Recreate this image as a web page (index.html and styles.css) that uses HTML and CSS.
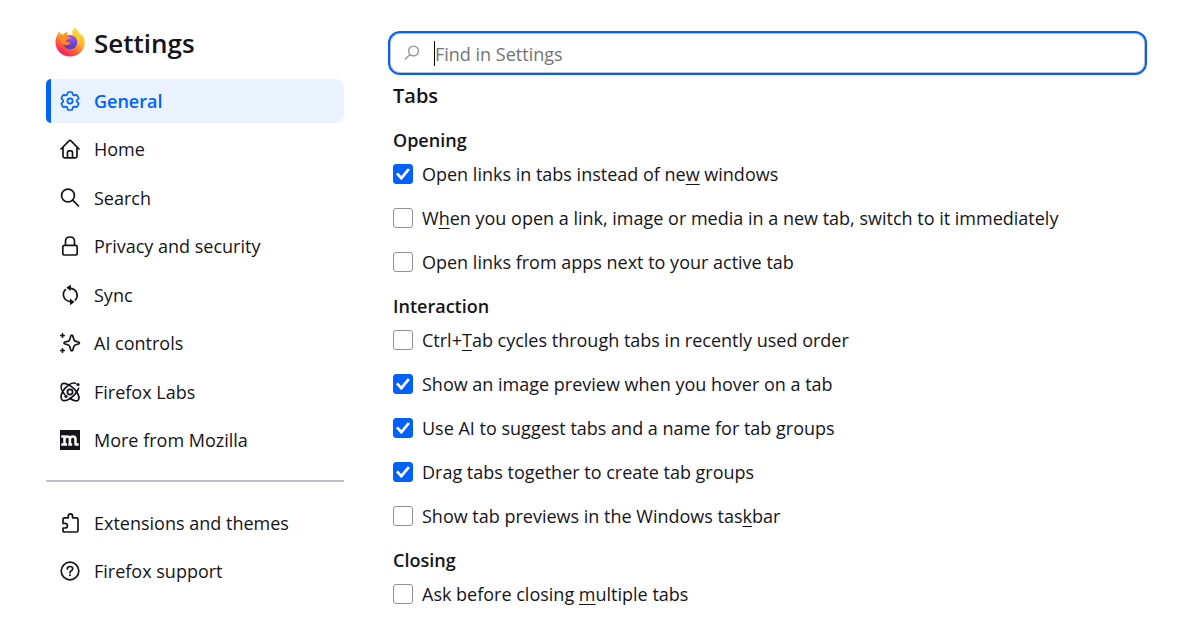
FILE: index.html
```html
<!DOCTYPE html>
<html lang="en">
<head>
<meta charset="utf-8">
<title>Settings</title>
<link rel="stylesheet" href="styles.css">
</head>
<body>
<div class="page">
  <aside class="sidebar">
    <header class="brand">
      <svg class="logo" viewBox="0 0 30 30" aria-hidden="true">
        <defs>
          <linearGradient id="flame" x1="0.85" y1="0.05" x2="0.25" y2="1">
            <stop offset="0" stop-color="#ffe63a"/>
            <stop offset="0.4" stop-color="#ffb12b"/>
            <stop offset="0.7" stop-color="#ff5a36"/>
            <stop offset="1" stop-color="#f0107c"/>
          </linearGradient>
          <radialGradient id="globe" cx="0.6" cy="0.15" r="0.8">
            <stop offset="0" stop-color="#a653f0"/>
            <stop offset="1" stop-color="#4b3fc4"/>
          </radialGradient>
          <linearGradient id="fox" x1="0" y1="0" x2="1" y2="1">
            <stop offset="0" stop-color="#ff9a2e"/>
            <stop offset="1" stop-color="#ff7a2c"/>
          </linearGradient>
        </defs>
        <path fill="url(#flame)" d="M20 0.500C22.500 2.500 23.500 4.500 24 6.200C25 6.600 25.500 7.300 26 7.800L26.600 7C29 10 30 13.500 29.700 16.500C29.100 24 22.800 29.600 15.200 29.600C7 29.600.700 23.500.500 15.800C.400 12.500 1.200 9.500 3 7.200L3.400 4.500L6.200 7.300L8.500 7.600C9.500 6 11 5 12.800 4.500C12 5.600 11.800 6.600 12 7.700L17.600 8C16.800 5 17.600 2.300 20 .500Z"/>
        <circle cx="15.200" cy="15.300" r="7" fill="url(#globe)"/>
        <path fill="url(#fox)" d="M3.400 7.500L8.800 7.700C10 6.500 11.200 5.800 12.600 5.500C11.800 7 11.700 8.300 12.200 9.200C13.600 9.500 15 9.700 15.700 10.200C15.800 11.600 14 12.200 12.400 12.500C11.600 13.400 11 14.200 11.200 15C12.800 14.600 14.200 15.200 15.400 16.100C14 18.300 11.500 18.700 9.500 18C6 16.500 5 12.800 3.400 7.500Z"/>
        <path fill="#ffcb2f" d="M17.600 8C21.500 9.800 24 13.500 22.500 18.500C25.500 14.500 25.500 9.500 22.800 6.500Z" opacity=".85"/>
      </svg>
      <h1 class="title">Settings</h1>
    </header>

    <nav aria-label="Categories">
      <ul class="nav nav-main">
        <li><a class="nav-item selected" href="#general" aria-current="page">
          <svg class="icon" viewBox="2 2 20 20"><path d="M9.594 3.940c.090-.542.560-.940 1.110-.940h2.593c.550 0 1.020.398 1.110.940l.213 1.281c.063.374.313.686.645.870.074.040.147.083.220.127.325.196.720.257 1.075.124l1.217-.456a1.125 1.125 0 0 1 1.370.490l1.296 2.247a1.125 1.125 0 0 1-.260 1.431l-1.003.827c-.293.241-.438.613-.430.992a7.723 7.723 0 0 1 0 .255c-.008.378.137.750.430.991l1.004.827c.424.350.534.955.260 1.430l-1.298 2.247a1.125 1.125 0 0 1-1.369.491l-1.217-.456c-.355-.133-.750-.072-1.076.124a6.470 6.470 0 0 1-.220.128c-.331.183-.581.495-.644.869l-.213 1.281c-.090.543-.560.940-1.110.940h-2.594c-.550 0-1.019-.398-1.110-.940l-.213-1.281c-.062-.374-.312-.686-.644-.870a6.520 6.520 0 0 1-.220-.127c-.325-.196-.720-.257-1.076-.124l-1.217.456a1.125 1.125 0 0 1-1.369-.490l-1.297-2.247a1.125 1.125 0 0 1 .260-1.431l1.004-.827c.292-.240.437-.613.430-.991a6.932 6.932 0 0 1 0-.255c.007-.380-.138-.751-.430-.992l-1.004-.827a1.125 1.125 0 0 1-.260-1.430l1.297-2.247a1.125 1.125 0 0 1 1.370-.491l1.216.456c.356.133.751.072 1.076-.124.072-.044.146-.086.220-.128.332-.183.582-.495.644-.869l.214-1.280Z"/><circle cx="12" cy="12" r="2.600"/></svg>
          <span>General</span></a></li>
        <li><a class="nav-item" href="#home">
          <svg class="icon" viewBox="0 0 20 20"><path d="M1 10L9 1.800Q10 .900 11 1.800L19 10M3 8.500V17.200Q3 18.800 4.600 18.800H15.400Q17 18.800 17 17.200V8.500M7.500 18.500V13.400Q7.500 11.800 9 11.800H11Q12.500 11.800 12.500 13.400V18.500"/></svg>
          <span>Home</span></a></li>
        <li><a class="nav-item" href="#search">
          <svg class="icon" viewBox="0 0 20 20"><circle cx="8" cy="7.500" r="6.400"/><path d="M12.700 12.200L18.500 18"/></svg>
          <span>Search</span></a></li>
        <li><a class="nav-item" href="#privacy">
          <svg class="icon" viewBox="0 0 20 20"><rect x="2.800" y="9.300" width="14.400" height="9.700" rx="1.800"/><path d="M5.500 9V5.300Q5.500 1 10 1T14.500 5.300V9"/></svg>
          <span>Privacy and security</span></a></li>
        <li><a class="nav-item" href="#sync">
          <svg class="icon" viewBox="0 0 20 20"><path d="M5.400 4.600C2 8 2.600 15.200 10 16.600M10.400 3.100C17.600 4.600 18.600 11.200 15.400 15"/><path class="solid" d="M10.800 -.500V6L6.300 2.800ZM10 13.500V20.200L14.500 16.900Z"/></svg>
          <span>Sync</span></a></li>
        <li><a class="nav-item" href="#ai">
          <svg class="icon" viewBox="0 0 20 20"><path d="M11 2.500Q11.800 1.600 12.600 2.500L14 6.800Q14.300 7.800 15.200 8.100L19 9.300Q19.800 10 19 10.700L15.200 12Q14.300 12.300 14 13.200L12.600 17.500Q11.800 18.400 11 17.500L9.600 13.200Q9.300 12.300 8.400 12L4.400 10.700Q3.600 10 4.400 9.300L8.400 8.100Q9.300 7.800 9.600 6.800Z"/><path d="M2.500.800V4.200M.800 2.500H4.200M2.500 15.800V19.200M.800 17.500H4.200"/></svg>
          <span>AI controls</span></a></li>
        <li><a class="nav-item" href="#labs">
          <svg class="icon" viewBox="0 0 20 20"><path d="M15.500 1.300C12.500.200 8 3 4.500 6.900C1.200 10.800 0 15.500 2 17.800C4.500 20.200 10 17.500 14.200 13.200C16.500 10.800 18 8.400 18.600 6.300M1.800 2.200C4 0 10 2.800 14.200 6.900C18.300 11.200 20.200 16.200 18.200 18.100C16.600 19.500 13 18.600 9.500 16.300M4.600 12.300C1.500 8.800 .200 4.500 1.800 2.200"/><circle cx="10" cy="10" r="2.600"/><circle class="solid" cx="18" cy="2.500" r="1.600"/><circle class="solid" cx="6" cy="14.300" r="1.600"/></svg>
          <span>Firefox Labs</span></a></li>
        <li><a class="nav-item" href="#mozilla">
          <svg class="icon" viewBox="0 0 20 20" aria-hidden="true"><rect class="solid" width="20" height="20"/><path class="mark" d="M1.300 6.400H4.500V15M1.300 14.600H7M4.500 9Q5 6.400 7.300 6.400Q9.900 6.400 9.900 9V15M8.300 14.600H12.200M9.900 9Q10.400 6.400 12.700 6.400Q15.500 6.400 15.500 9V14.600H18.700"/></svg>
          <span>More from Mozilla</span></a></li>
      </ul>
      <hr class="divider">
      <ul class="nav nav-extra">
        <li><a class="nav-item" href="#extensions">
          <svg class="icon" viewBox="0 0 20 20"><path d="M3 6.200Q3 4.800 4.400 4.800H8.200V3.300Q8.200.900 10.400.900T12.600 3.300V4.800H16.400Q18 4.800 18 6.400V17.400Q18 19 16.400 19H4.600Q3 19 3 17.400V15H5Q7.400 15 7.400 12.700T5 10.400H3Z"/></svg>
          <span>Extensions and themes</span></a></li>
        <li><a class="nav-item" href="#support">
          <svg class="icon" viewBox="0 0 20 20"><circle cx="10" cy="10" r="8.800"/><path d="M7.300 8Q7.300 5.500 10 5.500T12.700 7.800Q12.700 9 11.300 9.800T10 12"/><circle class="solid" cx="10" cy="14.300" r="1"/></svg>
          <span>Firefox support</span></a></li>
      </ul>
    </nav>
  </aside>

  <main class="content">
    <div class="search-box">
      <svg class="search-icon" viewBox="0 0 16 16" aria-hidden="true"><circle cx="9.500" cy="6" r="4.900"/><path d="M6 9.500L1 14.500"/></svg>
      <span class="caret"></span>
      <input class="search-input" type="search" placeholder="Find in Settings" aria-label="Find in Settings">
    </div>

    <div class="pane">
      <h2 class="pane-title">Tabs</h2>
      <section class="group">
        <h3 class="group-title">Opening</h3>
        <label class="option"><input type="checkbox" checked><span>Open links in tabs instead of ne<u>w</u> windows</span></label>
        <label class="option"><input type="checkbox"><span>W<u>h</u>en you open a link, image or media in a new tab, switch to it immediately</span></label>
        <label class="option"><input type="checkbox"><span>Open links from apps next to your active tab</span></label>
      </section>
      <section class="group">
        <h3 class="group-title">Interaction</h3>
        <label class="option"><input type="checkbox"><span>Ctrl+<u>T</u>ab cycles through tabs in recently used order</span></label>
        <label class="option"><input type="checkbox" checked><span>Show an image preview when you hover on a tab</span></label>
        <label class="option"><input type="checkbox" checked><span>Use AI to suggest tabs and a name for tab groups</span></label>
        <label class="option"><input type="checkbox" checked><span>Drag tabs together to create tab groups</span></label>
        <label class="option"><input type="checkbox"><span>Show tab previews in the Windows tas<u>k</u>bar</span></label>
      </section>
      <section class="group">
        <h3 class="group-title">Closing</h3>
        <label class="option"><input type="checkbox"><span>Ask before closing <u>m</u>ultiple tabs</span></label>
      </section>
    </div>
  </main>
</div>
</body>
</html>
```
FILE: styles.css
```css
* {
  box-sizing: border-box;
}

body {
  margin: 0;
  background: #fff;
  color: #15141a;
  font: 18px/24px "Open Sans", "Noto Sans", sans-serif;
}

h1, h2, h3, ul {
  margin: 0;
  padding: 0;
}

.page {
  display: grid;
  grid-template-columns: 298px minmax(0, 1fr);
  column-gap: 44px;
  padding: 24px 36px 12px 46px;
}

.brand {
  display: flex;
  align-items: center;
  gap: 9px;
  padding-left: 9px;
  margin-bottom: 17px;
}

.logo {
  width: 30px;
  height: 30px;
  margin-top: -2px;
}

.title {
  font-size: 26px;
  line-height: 38px;
  font-weight: 600;
}

.nav {
  display: flex;
  flex-direction: column;
  list-style: none;
}

.nav-main {
  min-height: 383px;
  justify-content: space-between;
}

.nav-extra {
  gap: 4px;
}

.nav-item {
  display: flex;
  align-items: center;
  gap: 14px;
  height: 44px;
  padding-left: 14px;
  border-radius: 8px;
  color: inherit;
  text-decoration: none;
}

.nav-item.selected {
  padding-left: 9px;
  border-left: 5px solid #0061fe;
  border-radius: 5px 8px 8px 5px;
  background: #eaf2ff;
  color: #0061fe;
  font-weight: 600;
}

.icon {
  width: 20px;
  height: 20px;
  flex: none;
  overflow: visible;
  fill: none;
  stroke: currentColor;
  stroke-width: 1.7;
  stroke-linecap: round;
  stroke-linejoin: round;
}

.icon .solid {
  fill: currentColor;
  stroke: none;
}

.icon .mark {
  stroke: #fff;
  stroke-width: 2.5;
  stroke-linecap: butt;
}

.divider {
  height: 2px;
  margin: 18px 0 19px;
  border: 0;
  background: #bfbfc9;
}

.search-box {
  display: flex;
  align-items: center;
  height: 44px;
  margin-top: 7px;
  padding: 0 14px;
  border: 2px solid #0061fe;
  border-radius: 12px;
  box-shadow: inset 0 0 0 1px #bfbfc9;
}

.search-icon {
  width: 16px;
  height: 16px;
  flex: none;
  margin-right: 14px;
  fill: none;
  stroke: #8f8f9d;
  stroke-width: 1.3;
}

.caret {
  width: 1px;
  height: 25px;
  background: #000;
}

.search-input {
  flex: 1;
  min-width: 0;
  padding: 2px 0 0;
  border: 0;
  outline: 0;
  background: transparent;
  color: inherit;
  font: inherit;
}

.search-input::placeholder {
  color: #737373;
  opacity: 1;
}

.pane {
  padding: 8px 0 0 5px;
}

.pane-title {
  font-size: 20px;
  line-height: 26px;
  font-weight: 600;
  margin-bottom: 19px;
}

.group {
  display: flex;
  flex-direction: column;
  align-items: flex-start;
  gap: 16px;
  margin-bottom: 18px;
}

.group-title {
  font-size: 18px;
  font-weight: 600;
  margin-bottom: -8px;
}

.option {
  display: flex;
  align-items: center;
  gap: 9px;
  min-height: 28px;
}

.option input {
  appearance: none;
  display: grid;
  place-items: center;
  flex: none;
  width: 20px;
  height: 20px;
  margin: 0;
  border: 1px solid #8f8f9d;
  border-radius: 3px;
  background: #fff;
}

.option input:checked {
  border-color: #0061fe;
  background: #0061fe;
}

.option input:checked::before {
  content: "";
  width: 14px;
  height: 12px;
  background: #fff;
  clip-path: polygon(0 52%, 14% 38%, 38% 66%, 84% 2%, 100% 14%, 42% 98%, 35% 98%);
}

.option u {
  text-underline-offset: 3px;
  text-decoration-thickness: 1px;
}
```
